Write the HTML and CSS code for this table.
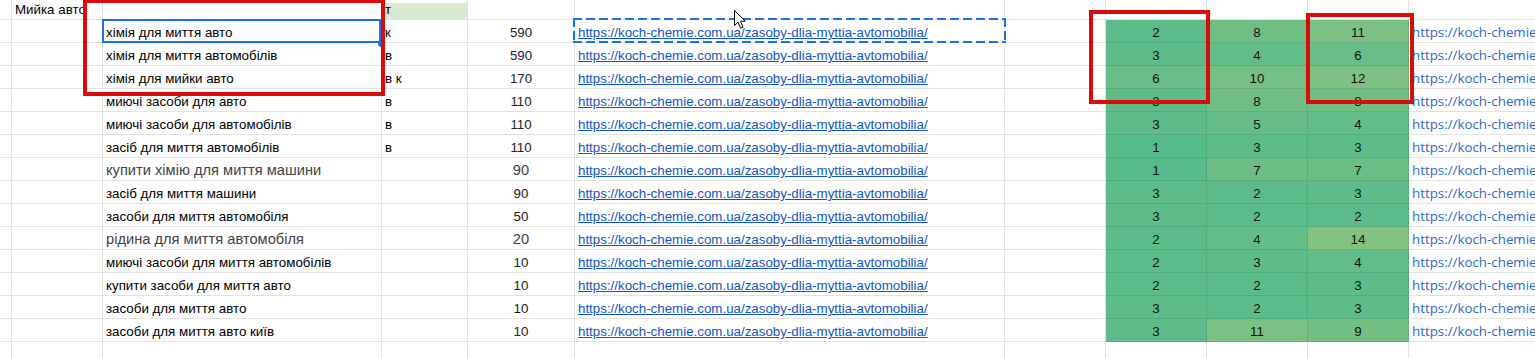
FILE: index.html
```html
<!DOCTYPE html>
<html lang="uk">
<head>
<meta charset="utf-8">
<title>Мийка авто</title>
<link rel="stylesheet" href="styles.css">
</head>
<body>
<div class="wrap">
<div class="sheet">
  <!-- row 0 -->
  <div class="c"></div><div class="c">Мийка авто</div><div class="c"></div><div class="c hdr">т</div><div class="c"></div><div class="c"></div><div class="c"></div><div class="c"></div><div class="c"></div><div class="c"></div><div class="c"></div>
  <!-- row 1 -->
  <div class="c"></div><div class="c"></div><div class="c">хімія для миття авто</div><div class="c">к</div><div class="c n">590</div><div class="c"><a class="lnk">https://koch-chemie.com.ua/zasoby-dlia-myttia-avtomobilia/</a></div><div class="c"></div><div class="c h v2">2</div><div class="c h v8">8</div><div class="c h v11">11</div><div class="c u">https://koch-chemie.com.ua/zasoby-dlia-myttia-avtomobilia/</div>
  <!-- row 2 -->
  <div class="c"></div><div class="c"></div><div class="c">хімія для миття автомобілів</div><div class="c">в</div><div class="c n">590</div><div class="c"><a class="lnk">https://koch-chemie.com.ua/zasoby-dlia-myttia-avtomobilia/</a></div><div class="c"></div><div class="c h v3">3</div><div class="c h v4">4</div><div class="c h v6">6</div><div class="c u">https://koch-chemie.com.ua/zasoby-dlia-myttia-avtomobilia/</div>
  <!-- row 3 -->
  <div class="c"></div><div class="c"></div><div class="c">хімія для мийки авто</div><div class="c">в к</div><div class="c n">170</div><div class="c"><a class="lnk">https://koch-chemie.com.ua/zasoby-dlia-myttia-avtomobilia/</a></div><div class="c"></div><div class="c h v6">6</div><div class="c h v10">10</div><div class="c h v12">12</div><div class="c u">https://koch-chemie.com.ua/zasoby-dlia-myttia-avtomobilia/</div>
  <!-- row 4 -->
  <div class="c"></div><div class="c"></div><div class="c">миючі засоби для авто</div><div class="c">в</div><div class="c n">110</div><div class="c"><a class="lnk">https://koch-chemie.com.ua/zasoby-dlia-myttia-avtomobilia/</a></div><div class="c"></div><div class="c h v3">3</div><div class="c h v8">8</div><div class="c h v8">8</div><div class="c u">https://koch-chemie.com.ua/zasoby-dlia-myttia-avtomobilia/</div>
  <!-- row 5 -->
  <div class="c"></div><div class="c"></div><div class="c">миючі засоби для автомобілів</div><div class="c">в</div><div class="c n">110</div><div class="c"><a class="lnk">https://koch-chemie.com.ua/zasoby-dlia-myttia-avtomobilia/</a></div><div class="c"></div><div class="c h v3">3</div><div class="c h v5">5</div><div class="c h v4">4</div><div class="c u">https://koch-chemie.com.ua/zasoby-dlia-myttia-avtomobilia/</div>
  <!-- row 6 -->
  <div class="c"></div><div class="c"></div><div class="c">засіб для миття автомобілів</div><div class="c">в</div><div class="c n">110</div><div class="c"><a class="lnk">https://koch-chemie.com.ua/zasoby-dlia-myttia-avtomobilia/</a></div><div class="c"></div><div class="c h v1">1</div><div class="c h v3">3</div><div class="c h v3">3</div><div class="c u">https://koch-chemie.com.ua/zasoby-dlia-myttia-avtomobilia/</div>
  <!-- row 7 -->
  <div class="c"></div><div class="c"></div><div class="c big">купити хімію для миття машини</div><div class="c"></div><div class="c n big">90</div><div class="c"><a class="lnk">https://koch-chemie.com.ua/zasoby-dlia-myttia-avtomobilia/</a></div><div class="c"></div><div class="c h v1">1</div><div class="c h v7">7</div><div class="c h v7">7</div><div class="c u">https://koch-chemie.com.ua/zasoby-dlia-myttia-avtomobilia/</div>
  <!-- row 8 -->
  <div class="c"></div><div class="c"></div><div class="c">засіб для миття машини</div><div class="c"></div><div class="c n">90</div><div class="c"><a class="lnk">https://koch-chemie.com.ua/zasoby-dlia-myttia-avtomobilia/</a></div><div class="c"></div><div class="c h v3">3</div><div class="c h v2">2</div><div class="c h v3">3</div><div class="c u">https://koch-chemie.com.ua/zasoby-dlia-myttia-avtomobilia/</div>
  <!-- row 9 -->
  <div class="c"></div><div class="c"></div><div class="c">засоби для миття автомобіля</div><div class="c"></div><div class="c n">50</div><div class="c"><a class="lnk">https://koch-chemie.com.ua/zasoby-dlia-myttia-avtomobilia/</a></div><div class="c"></div><div class="c h v3">3</div><div class="c h v2">2</div><div class="c h v2">2</div><div class="c u">https://koch-chemie.com.ua/zasoby-dlia-myttia-avtomobilia/</div>
  <!-- row 10 -->
  <div class="c"></div><div class="c"></div><div class="c big">рідина для миття автомобіля</div><div class="c"></div><div class="c n big">20</div><div class="c"><a class="lnk">https://koch-chemie.com.ua/zasoby-dlia-myttia-avtomobilia/</a></div><div class="c"></div><div class="c h v2">2</div><div class="c h v4">4</div><div class="c h v14">14</div><div class="c u">https://koch-chemie.com.ua/zasoby-dlia-myttia-avtomobilia/</div>
  <!-- row 11 -->
  <div class="c"></div><div class="c"></div><div class="c">миючі засоби для миття автомобілів</div><div class="c"></div><div class="c n">10</div><div class="c"><a class="lnk">https://koch-chemie.com.ua/zasoby-dlia-myttia-avtomobilia/</a></div><div class="c"></div><div class="c h v2">2</div><div class="c h v3">3</div><div class="c h v4">4</div><div class="c u">https://koch-chemie.com.ua/zasoby-dlia-myttia-avtomobilia/</div>
  <!-- row 12 -->
  <div class="c"></div><div class="c"></div><div class="c">купити засоби для миття авто</div><div class="c"></div><div class="c n">10</div><div class="c"><a class="lnk">https://koch-chemie.com.ua/zasoby-dlia-myttia-avtomobilia/</a></div><div class="c"></div><div class="c h v2">2</div><div class="c h v2">2</div><div class="c h v3">3</div><div class="c u">https://koch-chemie.com.ua/zasoby-dlia-myttia-avtomobilia/</div>
  <!-- row 13 -->
  <div class="c"></div><div class="c"></div><div class="c">засоби для миття авто</div><div class="c"></div><div class="c n">10</div><div class="c"><a class="lnk">https://koch-chemie.com.ua/zasoby-dlia-myttia-avtomobilia/</a></div><div class="c"></div><div class="c h v3">3</div><div class="c h v2">2</div><div class="c h v3">3</div><div class="c u">https://koch-chemie.com.ua/zasoby-dlia-myttia-avtomobilia/</div>
  <!-- row 14 -->
  <div class="c"></div><div class="c"></div><div class="c">засоби для миття авто київ</div><div class="c"></div><div class="c n">10</div><div class="c"><a class="lnk">https://koch-chemie.com.ua/zasoby-dlia-myttia-avtomobilia/</a></div><div class="c"></div><div class="c h v3">3</div><div class="c h v11">11</div><div class="c h v9">9</div><div class="c u">https://koch-chemie.com.ua/zasoby-dlia-myttia-avtomobilia/</div>
  <!-- row 15 -->
  <div class="c"></div><div class="c"></div><div class="c"></div><div class="c"></div><div class="c"></div><div class="c"></div><div class="c"></div><div class="c"></div><div class="c"></div><div class="c"></div><div class="c"></div>
</div>

<div class="sel"><span class="handle"></span></div>
<div class="marquee"></div>
<div class="redbox rb1"></div>
<div class="redbox rb2"></div>
<div class="redbox rb3"></div>
<svg class="cursor" width="14" height="21" viewBox="0 0 14 21"><path d="M1.5 1.5 L1.5 16.5 L5 13.2 L7.6 19.2 L10 18.2 L7.5 12.2 L12.3 12.2 Z" fill="#fff" stroke="#000" stroke-width="1" stroke-linejoin="round"/></svg>
</div>
</body>
</html>
```
FILE: styles.css
```css
html, body {
  margin: 0;
  padding: 0;
  background: #fff;
  overflow: hidden;
}
body {
  font-family: "Liberation Sans", Arial, sans-serif;
  font-size: 13.333px;
  color: #000;
}
.wrap {
  position: relative;
  width: 1535px;
  height: 358px;
  overflow: hidden;
}
.sheet {
  display: grid;
  grid-template-columns: 12px 91px 279px 86px 107px 430px 101px 101px 101px 101px 260px;
  grid-template-rows: 20px repeat(15, 23px);
  width: 1669px;
}
.c {
  box-sizing: border-box;
  border-right: 1px solid #e2e2e2;
  border-bottom: 1px solid #e2e2e2;
  padding: 0 3px 2px;
  display: flex;
  align-items: flex-end;
  white-space: nowrap;
  line-height: normal;
  min-width: 0;
}
.hdr {
  background: linear-gradient(#fff 0 3px, #d9ead3 3px);
}
.n {
  justify-content: center;
  color: #222;
}
.big {
  font-size: 14.667px;
  color: #434343;
  padding-bottom: 2px;
}
.lnk {
  color: #1155cc;
  text-decoration: underline;
}
.u {
  font-family: "Open Sans", "Liberation Sans", sans-serif;
  font-size: 13.333px;
  color: #2a6ad3;
  overflow: hidden;
  padding-bottom: 1px;
}
.h {
  justify-content: center;
  border-color: rgba(0, 0, 0, 0.09);
  color: #111;
}
.v1 { background-color: #57bb8a; }
.v2 { background-color: #5bbc89; }
.v3 { background-color: #5ebc88; }
.v4 { background-color: #62bd88; }
.v5 { background-color: #65bd87; }
.v6 { background-color: #68be86; }
.v7 { background-color: #6cbe85; }
.v8 { background-color: #6fbf85; }
.v9 { background-color: #73bf84; }
.v10 { background-color: #76c083; }
.v11 { background-color: #7ac183; }
.v12 { background-color: #7ec182; }
.v14 { background-color: #84c280; }

.sel {
  position: absolute;
  left: 102px;
  top: 19px;
  width: 279px;
  height: 24px;
  box-sizing: border-box;
  border: 2px solid #1a73e8;
}
.handle {
  position: absolute;
  right: -6px;
  bottom: -6px;
  width: 7px;
  height: 7px;
  border-radius: 50%;
  background: #1a73e8;
}
.marquee {
  position: absolute;
  left: 573px;
  top: 18px;
  width: 433px;
  height: 25px;
  background:
    repeating-linear-gradient(90deg, #1a73e8 0 9px, transparent 9px 13px) left top / 100% 2px no-repeat,
    repeating-linear-gradient(90deg, #1a73e8 0 9px, transparent 9px 13px) left bottom / 100% 2px no-repeat,
    repeating-linear-gradient(180deg, #1a73e8 0 9px, transparent 9px 13px) left top / 2px 100% no-repeat,
    repeating-linear-gradient(180deg, #1a73e8 0 9px, transparent 9px 13px) right top / 2px 100% no-repeat;
}
.redbox {
  position: absolute;
  box-sizing: border-box;
  border: 4px solid #dc0a0a;
}
.rb1 { left: 83px; top: -1px; width: 302px; height: 97px; }
.rb2 { left: 1089px; top: 10px; width: 121px; height: 94px; }
.rb3 { left: 1306px; top: 13px; width: 108px; height: 91px; }
.cursor {
  position: absolute;
  left: 733px;
  top: 9px;
}
```
